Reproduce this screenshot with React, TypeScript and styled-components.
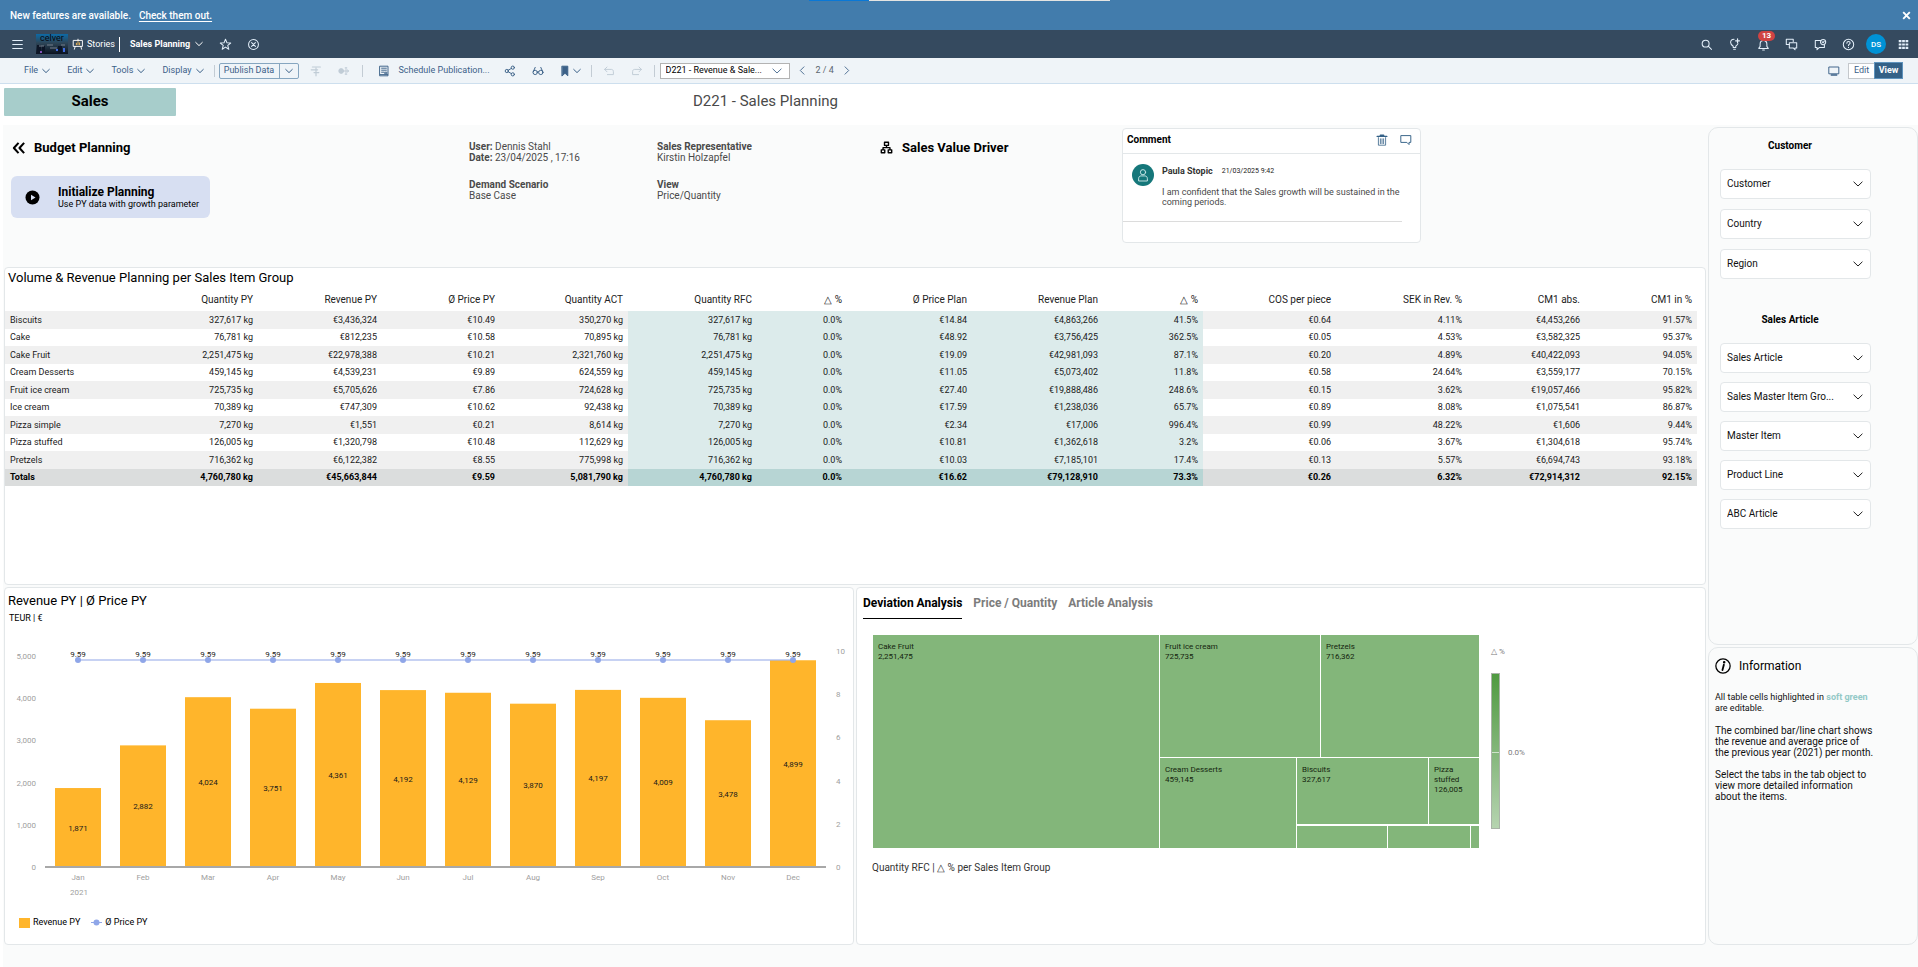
import React from "react";
import styled, { createGlobalStyle, css } from "styled-components";

const Global = createGlobalStyle`
  * { box-sizing: border-box; }
  body { margin: 0; background: #fff; color: #000; font: 10px/11px Roboto, "Liberation Sans", sans-serif; }
  button, select { font: inherit; color: inherit; border: 0; background: none; padding: 0; margin: 0; }
  select { appearance: none; }
  h1, h2, h3, p, dl, dd { margin: 0; font-size: inherit; font-weight: inherit; }
  svg { display: block; flex: none; }
`;

const Page = styled.div`min-height: 100vh; display: flex; flex-direction: column;`;

/* ---------- icons ---------- */

const Svg = styled.svg`fill: none; stroke: currentColor; stroke-linecap: round; stroke-linejoin: round;`;

const ICONS = {
  menu: <path d="M1.500 3h12M1.500 7.500h12M1.500 12h12" strokeLinecap="butt" />,
  close: <path d="M3 3l9 9M12 3l-9 9" strokeLinecap="butt" />,
  star: <path d="M7.500 1.500l1.700 4.100 4.300.2-3.400 2.800 1.200 4.400-3.800-2.500-3.800 2.500 1.200-4.400-3.400-2.800 4.300-.2z" />,
  closeCircle: <><circle cx="7.500" cy="7.500" r="5.700" /><path d="M5.300 5.300l4.400 4.400M9.700 5.300l-4.400 4.400" /></>,
  easel: <><path d="M2 3h11v7.500H2zM7.500 1.500V3M4 10.500L3 14M11 10.500l1 3.500" /><path d="M5.500 8.500v-2M7.500 8.500v-4M9.500 8.500V6" stroke="#f0b95a" /></>,
  search: <><circle cx="6.500" cy="6.500" r="4" /><path d="M9.500 9.500l3.700 3.700" /></>,
  bulb: <><path d="M6 11V9.500C4.500 8.500 3 7.300 3 5.300 3 3 4.800 1.500 7 1.500M6 11h3M9 11V9.300c1-.8 2-1.500 2.500-2.800M6.500 13h2" /><path d="M11 1v4.400M8.800 3.200h4.400" strokeWidth="1.400" /></>,
  bell: <><path d="M2 12h11l-1.600-2.300V7c0-2.400-1.600-4-3.900-4S3.600 4.600 3.600 7v2.700zM6.500 13.800h2" /></>,
  chats: <><path d="M9.500 4V1.500h-8v6H5" /><path d="M5 5.500h8.500v6h-2v2l-2-2H5z" /></>,
  feedback: <><path d="M8 3H1.500v8h2v2.500L6 11h6V8" /><circle cx="10.500" cy="4.700" r="3" /><path d="M9.500 4.500l1 1 1.200-1.600" /></>,
  help: <><circle cx="7.500" cy="7.500" r="6" /><path d="M5.600 6c0-1.200.8-1.900 1.900-1.900s1.900.7 1.900 1.700c0 1.300-1.900 1.400-1.900 2.900M7.500 10.700v.2" /></>,
  grid: <path d="M1 3h13M1 7.500h13M1 12h13" strokeDasharray="3.700 .95" strokeWidth="3" strokeLinecap="butt" />,
  monitor: <><path d="M1.500 2.500h12v8.500h-12z" /><path d="M4 12.500h7" strokeWidth="1.600" /></>,
  format: <><path d="M3 2.500h10M1.500 6h8M5 9.500h6M7.500 4v9.500" strokeWidth="1.500" /></>,
  nodes: <><circle cx="4" cy="7.500" r="3" fill="currentColor" /><path d="M7 7.500h6M10 3.500v8M9 3.500h2M9 11.500h2M11.500 6l2 1.500-2 1.500" /></>,
  schedule: <><path d="M2.500 1.500h10v12h-10z" /><path d="M4.500 4h6M4.500 6.500h6M4.500 9h3M9 9h2v2H9zM3 12h9" /></>,
  share: <><circle cx="3.500" cy="7.500" r="2" /><circle cx="11" cy="3.300" r="2" /><circle cx="11" cy="11.700" r="2" /><path d="M5.300 6.500l4-2.300M5.300 8.500l4 2.300" /></>,
  glasses: <><circle cx="4" cy="9.300" r="2.700" /><circle cx="11" cy="9.300" r="2.700" /><path d="M1.500 8.500L4 3M13.500 8.500L11 3M6.700 8.500c.5-.5 1.100-.5 1.600 0" /></>,
  bookmark: <path d="M4 1.500h7v12l-3.500-3.200L4 13.500z" fill="currentColor" />,
  undo: <path d="M5 2.500L2 5.500l3 3M2 5.500h8.500c1.500 0 2.500 1 2.500 2.800V12H5.500" />,
  redo: <path d="M10 2.500l3 3-3 3M13 5.500H4.500C3 5.500 2 6.500 2 8.300V12h7.500" />,
  left: <path d="M9.500 2.500l-5 5 5 5" />,
  right: <path d="M5.500 2.500l5 5-5 5" />,
  trash: <><path d="M1.500 3h12M5.500 2.500V1.500h4v1" strokeWidth="1.800" /><path d="M3 4.500v9.500h9V4.500M5.500 6v6M7.500 6v6M9.500 6v6" /></>,
  comment: <path d="M1.500 2h12v8.500h-2.200v2.700L8.600 10.500H1.500z" />,
  person: <><circle cx="7.500" cy="4.500" r="2.800" /><path d="M2.800 13.500v-2c0-2 1.200-3 2.700-3h4c1.500 0 2.700 1 2.700 3v2z" /></>,
  back: <path d="M7 2L2 7.500 7 13M13 2L8 7.500 13 13" strokeWidth="2.200" strokeLinecap="butt" />,
  tree: <><path d="M5.200 1.500h4.600v3.600H5.200zM1.500 10.200h4v3.300h-4zM9.500 10.200h4v3.300h-4zM7.500 5v2.700M3.500 10V7.700h8V10" strokeWidth="1.600" /></>,
  info: <><circle cx="7.500" cy="7.500" r="6.700" /><path d="M8.300 6.300L7 11.300" strokeWidth="1.700" /><circle cx="8.600" cy="4" r=".6" fill="currentColor" /></>,
  play: <><circle cx="7.500" cy="7.500" r="7" fill="currentColor" stroke="none" /><path d="M6 4.700v5.600l4.500-2.800z" fill="#d7dff2" stroke="none" /></>,
};

const Icon = ({ name, size = 13, weight = 1.2 }: { name: keyof typeof ICONS; size?: number; weight?: number }) => (
  <Svg width={size} height={size} viewBox="0 0 15 15" strokeWidth={weight} aria-hidden="true">{ICONS[name]}</Svg>
);

const Chevron = ({ size = 8 }: { size?: number }) => (
  <Svg width={size} height={size} viewBox="0 0 8 8" strokeWidth={size > 8 ? 0.7 : 1} aria-hidden="true"><path d="M.7 2.400L4 5.600l3.300-3.200" /></Svg>
);

/* ---------- notice and shell ---------- */

const Notice = styled.div`
  position: relative; height: 30px; padding: 0 6px 0 10px; display: flex; align-items: center;
  background: #427cac; color: #fff; font-weight: 500;
`;
const NoticeLink = styled.a`color: #fff; margin-left: 8px; text-underline-offset: 2px;`;
const Spacer = styled.div`flex: 1;`;
const Progress = styled.div`
  position: absolute; top: 0; left: 42.2%; width: 301px; height: 1px;
  background: linear-gradient(to right, #0a78d6 60px, #e4e4e2 60px);
`;
const CloseButton = styled.button`width: 12px; height: 12px; display: grid; place-items: center;`;

const Shell = styled.header`
  height: 28px; padding: 0 8px 0 10px; display: flex; align-items: center;
  background: #354a5f; color: #e3effa;
`;
const ShellButton = styled.button<{ $w?: number }>`
  position: relative; width: ${p => p.$w ?? 28}px; height: 24px; display: flex; align-items: center; justify-content: center;
`;
const Logo = styled.svg`margin: 0 4px 0 12px;`;
const StoriesLink = styled.a`
  display: flex; align-items: center; gap: 3px; height: 15px; padding-right: 4px; color: #fff; text-decoration: none;
  font-size: 9px; border-right: 1px solid #fff;
`;
const StoryButton = styled.button`
  display: flex; align-items: center; gap: 5px; margin: 0 8px 0 10px; color: #fff; font-size: 9px; font-weight: 700;
`;
const Badge = styled.span`
  position: absolute; top: -1px; left: 9px; width: 17px; height: 10px; border-radius: 5px;
  background: #d04343; color: #fff; font-size: 8px; line-height: 10px; font-weight: 700; text-align: center;
`;
const User = styled.button`
  width: 20px; height: 20px; margin: 0 10px 0 4px; border-radius: 50%; background: #0092d6; color: #fff; font-size: 8px; font-weight: 500;
`;

/* ---------- toolbar ---------- */

const Toolbar = styled.nav`
  height: 26px; padding: 0 15px 0 24px; display: flex; align-items: center;
  background: #eff4f8; border-bottom: 1px solid #cddfee; color: #3c6188; font-size: 9px; white-space: nowrap;
`;
const Menus = styled.div`display: flex; gap: 17px;`;
const MenuButton = styled.button`display: flex; align-items: center; gap: 4px;`;
const Rule = styled.i<{ $l?: number; $r?: number }>`
  width: 1px; height: 12px; background: #c3ccd4; margin: 0 ${p => p.$r ?? 3}px 0 ${p => p.$l ?? 3}px;
`;
const Split = styled.div`
  display: flex; height: 16px; border: 1px solid #86a6c0; border-radius: 2px; margin-right: 3px;
`;
const SplitButton = styled.button<{ $w: number }>`
  width: ${p => p.$w}px; display: flex; align-items: center; justify-content: center;
  & + & { border-left: 1px solid #86a6c0; }
`;
const ToolButton = styled.button<{ $w?: number }>`
  width: ${p => p.$w ?? 28}px; height: 20px; display: flex; align-items: center; justify-content: center; gap: 2px;
  &:disabled { color: #c0ccd6; }
`;
const ScheduleButton = styled.button`display: flex; align-items: center; gap: 9px; width: 111px; margin-right: 7px;`;
const SelectBox = styled.div`
  position: relative; display: flex; align-items: center;
  & > svg { position: absolute; right: 8px; pointer-events: none; }
`;
const PageSelect = styled.select`
  width: 130px; height: 16px; padding-left: 5px; border: 1px solid #b3b3b3; background: #fff; color: #000;
`;
const PageCount = styled.span`width: 18px; text-align: center; color: #5c6670;`;
const ModeButton = styled.button<{ $on?: boolean }>`
  height: 16px; width: 26px; background: #fff; border: 1px solid #c4c8cc; border-right: 0;
  ${p => p.$on && css`height: 17px; width: 29px; background: #346187; color: #fff; border: 1px solid #5e93bd; font-weight: 700;`}
`;

/* ---------- page body ---------- */

const TitleBar = styled.div`
  height: 41px; margin-left: 3px; padding: 4px 0 0 1px; display: grid; grid-template-columns: 172px 1fr 1080px;
  align-items: start; color: #4a4a4a; font-size: 15px; line-height: 26px;
`;
const AreaTag = styled.div`
  padding-bottom: 2px; background: #a7cdcb; color: #000; font-weight: 700; text-align: center; border-radius: 1px;
`;
const PageTitle = styled.h1`text-align: right; white-space: nowrap;`;

const Board = styled.main`
  flex: 1; margin-left: 3px; padding: 0 0 22px 1px; background: #fafbfb;
  display: grid; grid-template-columns: minmax(0, 1fr) 210px; column-gap: 2px;
`;
const Column = styled.div`display: flex; flex-direction: column; gap: 2px;`;
const Panel = styled.section`background: #fff; border: 1px solid #e3e7e9; border-radius: 4px;`;

const Hero = styled.div`
  height: 140px; display: grid; grid-template-columns: 465fr 188fr 223fr 242fr 300fr 284fr; color: #4a4a4a;
`;
const HeroHeading = styled.h2<{ $pad?: number; $gap?: number }>`
  display: flex; align-items: center; height: 15px; gap: ${p => p.$gap ?? 9}px; padding-left: ${p => p.$pad ?? 0}px;
  color: #000; font-size: 13px; font-weight: 700; white-space: nowrap;
`;
const HeroCell = styled.div`padding-top: 15px;`;
const Facts = styled.dl`
  padding-top: 16px;
  dt { font-weight: 700; }
  dd + dt { margin-top: 16px; }
`;
const Inline = styled.span`font-weight: 400;`;
const InitButton = styled.button`
  display: flex; align-items: center; gap: 18px; width: 199px; height: 42px; margin: 21px 0 0 7px; padding: 0 0 0 14px;
  border-radius: 6px; background: #d7dff2; color: #000; text-align: left; font-size: 9px;
`;
const InitTitle = styled.b`display: block; font-size: 12px; line-height: 14px;`;

const CommentCard = styled(Panel)`height: 115px; margin-top: 3px; width: 299px; color: #4a4a4a; font-size: 9px; line-height: 10px;`;
const CommentHead = styled.header`
  height: 25px; padding: 0 2px 3px 4px; display: flex; align-items: center;
  border-bottom: 1px solid #e3e7e9; color: #000; font-size: 10px; font-weight: 700;
`;
const CommentBody = styled.div`
  display: grid; grid-template-columns: 22px 1fr; column-gap: 8px; margin-right: 18px; padding: 10px 0 14px 9px; border-bottom: 1px solid #dcdcdc;
`;
const Avatar = styled.span`
  width: 22px; height: 22px; border-radius: 50%; background: #15777a; color: #cfe9e9; display: grid; place-items: center;
`;
const Author = styled.div`
  display: flex; gap: 9px; line-height: 15px; margin-bottom: 8px; color: #333;
  time { font-size: 7px; color: #222; }
`;
const IconButton = styled.button`width: 24px; height: 20px; display: grid; place-items: center; color: #346187;`;

/* ---------- planning table ---------- */

const TablePanel = styled(Panel)`min-height: 318px; padding: 2px 8px 0 0;`;
const PanelTitle = styled.h2`font-size: 13px; line-height: 15px; padding-left: 3px;`;
const Grid = styled.table`
  width: 100%; table-layout: fixed; border-collapse: collapse; text-align: right; font-size: 9px; color: #1a1a1a; white-space: nowrap;
  th, td { padding: 0 5px 0 0; font-weight: 400; }
  thead th { height: 26px; padding-top: 2px; font-size: 10px; color: #222; }
  tbody th { text-align: left; padding-left: 5px; }
  tbody tr { height: 17px; }
  tbody tr:nth-child(odd) { height: 18px; background: #f0f0f0; }
  tbody tr:last-child { background: #dbdddd; color: #000; }
  tbody tr:last-child > * { font-weight: 700; }
  tbody td:nth-child(n + 6):nth-child(-n + 10) { background: #dcebeb; }
  tbody tr:last-child td:nth-child(n + 6):nth-child(-n + 10) { background: #b7d5d4; }
`;

const COLUMNS: [string, number][] = [
  ["", 129], ["Quantity PY", 124], ["Revenue PY", 124], ["Ø Price PY", 118], ["Quantity ACT", 128], ["Quantity RFC", 129],
  ["△ %", 90], ["Ø Price Plan", 125], ["Revenue Plan", 131], ["△ %", 100], ["COS per piece", 133], ["SEK in Rev. %", 131],
  ["CM1 abs.", 118], ["CM1 in %", 112],
];
const ROWS = `Biscuits|327,617 kg|€3,436,324|€10.49|350,270 kg|327,617 kg|0.0%|€14.84|€4,863,266|41.5%|€0.64|4.11%|€4,453,266|91.57%
Cake|76,781 kg|€812,235|€10.58|70,895 kg|76,781 kg|0.0%|€48.92|€3,756,425|362.5%|€0.05|4.53%|€3,582,325|95.37%
Cake Fruit|2,251,475 kg|€22,978,388|€10.21|2,321,760 kg|2,251,475 kg|0.0%|€19.09|€42,981,093|87.1%|€0.20|4.89%|€40,422,093|94.05%
Cream Desserts|459,145 kg|€4,539,231|€9.89|624,559 kg|459,145 kg|0.0%|€11.05|€5,073,402|11.8%|€0.58|24.64%|€3,559,177|70.15%
Fruit ice cream|725,735 kg|€5,705,626|€7.86|724,628 kg|725,735 kg|0.0%|€27.40|€19,888,486|248.6%|€0.15|3.62%|€19,057,466|95.82%
Ice cream|70,389 kg|€747,309|€10.62|92,438 kg|70,389 kg|0.0%|€17.59|€1,238,036|65.7%|€0.89|8.08%|€1,075,541|86.87%
Pizza simple|7,270 kg|€1,551|€0.21|8,614 kg|7,270 kg|0.0%|€2.34|€17,006|996.4%|€0.99|48.22%|€1,606|9.44%
Pizza stuffed|126,005 kg|€1,320,798|€10.48|112,629 kg|126,005 kg|0.0%|€10.81|€1,362,618|3.2%|€0.06|3.67%|€1,304,618|95.74%
Pretzels|716,362 kg|€6,122,382|€8.55|775,998 kg|716,362 kg|0.0%|€10.03|€7,185,101|17.4%|€0.13|5.57%|€6,694,743|93.18%
Totals|4,760,780 kg|€45,663,844|€9.59|5,081,790 kg|4,760,780 kg|0.0%|€16.62|€79,128,910|73.3%|€0.26|6.32%|€72,914,312|92.15%`
  .split("\n").map(r => r.split("|"));

const PlanningTable = () => (
  <Grid>
    <colgroup>{COLUMNS.map(([, w], i) => <col key={i} width={w} />)}</colgroup>
    <thead><tr>{COLUMNS.map(([c], i) => <th key={i} scope="col">{c}</th>)}</tr></thead>
    <tbody>
      {ROWS.map(([name, ...cells]) => (
        <tr key={name}><th scope="row">{name}</th>{cells.map((c, i) => <td key={i}>{c}</td>)}</tr>
      ))}
    </tbody>
  </Grid>
);

/* ---------- charts ---------- */

const Lower = styled.div`flex: 1; display: grid; grid-template-columns: 1fr 1fr; gap: 2px;`;
const ChartPanel = styled(Panel)`padding: 5px 0 12px;`;
const Unit = styled.p`padding: 4px 0 2px 4px; font-size: 9px; line-height: 12px;`;
const Chart = styled.svg`width: 100%; height: auto; font-size: 8px;`;
const Legend = styled.div`display: flex; align-items: center; gap: 3px; padding: 4px 0 0 14px; font-size: 9px;`;
const Swatch = styled.i`width: 11px; height: 10px; background: #ffb52b;`;
const Marker = styled.svg`margin-left: 8px;`;

const MONTHS: [string, number][] = [["Jan", 1871], ["Feb", 2882], ["Mar", 4024], ["Apr", 3751], ["May", 4361], ["Jun", 4192],
  ["Jul", 4129], ["Aug", 3870], ["Sep", 4197], ["Oct", 4009], ["Nov", 3478], ["Dec", 4899]];

const RevenueChart = () => {
  const base = 241;
  const cx = (i: number) => 73 + i * 65;
  const ly = base - 207;
  return (
    <Chart viewBox="0 0 848 287" role="img" aria-label="Revenue and price per month">
      <g fill="#a0a0a0">
        {[0, 1, 2, 3, 4, 5].map(n => (
          <React.Fragment key={n}>
            <text x="31" y={base + 3 - n * 42.2} textAnchor="end">{(n * 1000).toLocaleString("en-US")}</text>
            <text x="831" y={base + 3 - n * 43.2}>{n * 2}</text>
          </React.Fragment>
        ))}
        {MONTHS.map(([m], i) => <text key={m} x={cx(i)} y="254" textAnchor="middle">{m}</text>)}
        <text x="74" y="269" textAnchor="middle">2021</text>
      </g>
      {MONTHS.map(([m, v], i) => {
        const h = v * 0.0422;
        return (
          <React.Fragment key={m}>
            <rect x={cx(i) - 23} y={base - h} width="46" height={h} fill="#ffb52b" />
            <text x={cx(i)} y={base - h / 2 + 3} textAnchor="middle" fill="#1a1a1a">{v.toLocaleString("en-US")}</text>
          </React.Fragment>
        );
      })}
      <path d="M40 241H821" stroke="#a8a8a8" strokeWidth="2" />
      <path d={`M${cx(0)} ${ly}H${cx(11)}`} stroke="#8fa6e8" strokeWidth="1.200" />
      {MONTHS.map(([m], i) => (
        <React.Fragment key={m}>
          <circle cx={cx(i)} cy={ly} r="3" fill="#8fa6e8" />
          <text x={cx(i)} y={ly - 3} textAnchor="middle" fill="#1a1a1a">9.59</text>
        </React.Fragment>
      ))}
    </Chart>
  );
};

const Tabs = styled.div`display: flex; gap: 11px; margin-left: 6px;`;
const Tab = styled.button<{ $on?: boolean }>`
  height: 26px; padding-bottom: 4px; font-size: 12px; font-weight: 700; color: ${p => (p.$on ? "#000" : "#7c7c7c")};
  border-bottom: 1px solid ${p => (p.$on ? "#000" : "transparent")};
`;
const Caption = styled.p`padding: 0 0 0 15px; color: #333;`;

type Cell = [number, number, number, number, string[]];
const CELLS: Cell[] = [
  [16, 16, 286, 213, ["Cake Fruit", "2,251,475"]],
  [303, 16, 160, 122, ["Fruit ice cream", "725,735"]],
  [464, 16, 158, 122, ["Pretzels", "716,362"]],
  [303, 139, 136, 90, ["Cream Desserts", "459,145"]],
  [440, 139, 131, 66, ["Biscuits", "327,617"]],
  [572, 139, 50, 66, ["Pizza", "stuffed", "126,005"]],
  [440, 207, 90, 22, []],
  [531, 207, 82, 22, []],
  [614, 207, 8, 22, []],
];
const TreeMap = () => (
  <Chart viewBox="0 0 848 243" role="img" aria-label="Quantity RFC per sales item group">
    <defs><linearGradient id="scale" x2="0" y2="1"><stop stopColor="#4f9a40" /><stop offset=".5" stopColor="#83b67a" /><stop offset="1" stopColor="#b6d4b0" /></linearGradient></defs>
    {CELLS.map(([x, y, w, h, lines], i) => (
      <g key={i} fill="#15250f">
        <rect x={x} y={y} width={w} height={h} fill="#83b67a" />
        {lines.map((l, n) => <text key={l} x={x + 5} y={y + 14 + n * 10}>{l}</text>)}
      </g>
    ))}
    <g fill="#7a7a7a"><text x="634" y="35">△ %</text><text x="651" y="136">0.0%</text></g>
    <rect x="634.500" y="54.500" width="8" height="155" fill="url(#scale)" stroke="#a9b3a7" />
    <path d="M635 133.500h7" stroke="#cfe3cb" />
  </Chart>
);

/* ---------- side column ---------- */

const Side = styled.div`display: flex; flex-direction: column; gap: 2px; padding-top: 2px;`;
const SidePanel = styled.section<{ $grow?: boolean }>`
  border: 1px solid #e3e7e9; border-radius: 10px; padding: 11px 11px 0; min-height: 518px;
  ${p => p.$grow && css`flex: 1; min-height: 0; padding: 10px 6px;`}
`;
const FilterTitle = styled.h3`width: 140px; height: 30px; font-weight: 700; line-height: 14px; text-align: center;`;
const Filters = styled.div<{ $gap: number }>`display: flex; flex-direction: column; gap: ${p => p.$gap}px; width: 151px; margin-bottom: 34px;`;
const FilterSelect = styled.select`
  width: 100%; height: 30px; padding: 0 0 2px 6px; border: 1px solid #e3e7e9; border-radius: 4px; background: #fff; color: #111;
`;
const Filter = ({ name }: { name: string }) => (
  <SelectBox><FilterSelect aria-label={name}><option>{name}</option></FilterSelect><Chevron size={10} /></SelectBox>
);
const InfoTitle = styled.h2`display: flex; align-items: center; gap: 8px; height: 16px; font-size: 12px; margin-bottom: 18px;`;
const InfoText = styled.p<{ $small?: boolean }>`
  margin-bottom: 11px; font-size: ${p => (p.$small ? 9 : 10)}px; color: #111;
  b { color: #93c9c7; }
`;

export default function App() {
  return (
    <Page>
      <Global />
      <Notice>
        New features are available. <NoticeLink href="#">Check them out.</NoticeLink>
        <Progress /><Spacer /><CloseButton aria-label="Close"><Icon name="close" size={11} weight={2.6} /></CloseButton>
      </Notice>
      <Shell>
        <ShellButton $w={14} aria-label="Menu"><Icon name="menu" /></ShellButton>
        <Logo width="32" height="20" viewBox="0 0 32 20" aria-hidden="true">
          <defs><linearGradient id="sky" x2="0" y2="1"><stop stopColor="#0d6aa6" /><stop offset=".45" stopColor="#2e4658" /><stop offset="1" stopColor="#0a1220" /></linearGradient></defs>
          <path d="M0 0h32v20H0z" fill="url(#sky)" />
          <path d="M1 11h4v9H1zM6 12h3v8H6zM22 12h4v8h-4z" fill="#0c1526" />
          <path d="M3 12h5M11 11h6M14 14h7M25 11h4" stroke="#77808e" />
          <path d="M20 15h2v2h-2zM27 14h2v4h-2z" fill="#3f6ce0" />
          <path d="M4 17h2v2H4z" fill="#8452b8" />
          <text x="16" y="7" textAnchor="middle" fontSize="9" fill="#05080f">celver</text>
        </Logo>
        <StoriesLink href="#"><Icon name="easel" size={12} />Stories</StoriesLink>
        <StoryButton>Sales Planning<Chevron /></StoryButton>
        <ShellButton aria-label="Favourite"><Icon name="star" /></ShellButton>
        <ShellButton aria-label="Close story"><Icon name="closeCircle" /></ShellButton>
        <Spacer />
        <ShellButton aria-label="Search"><Icon name="search" /></ShellButton>
        <ShellButton $w={29} aria-label="Insights"><Icon name="bulb" /></ShellButton>
        <ShellButton aria-label="Notifications"><Icon name="bell" /><Badge>13</Badge></ShellButton>
        <ShellButton $w={29} aria-label="Discussions"><Icon name="chats" /></ShellButton>
        <ShellButton aria-label="Feedback"><Icon name="feedback" /></ShellButton>
        <ShellButton aria-label="Help"><Icon name="help" /></ShellButton>
        <User>DS</User>
        <ShellButton $w={14} aria-label="Products"><Icon name="grid" size={11} /></ShellButton>
      </Shell>
      <Toolbar>
        <Menus>{["File", "Edit", "Tools", "Display"].map(m => <MenuButton key={m}>{m}<Chevron /></MenuButton>)}</Menus>
        <Rule $l={10} $r={4} />
        <Split><SplitButton $w={59}>Publish Data</SplitButton><SplitButton $w={19} aria-label="More"><Chevron /></SplitButton></Split>
        <ToolButton disabled aria-label="Format"><Icon name="format" size={12} /></ToolButton>
        <ToolButton disabled aria-label="Allocate"><Icon name="nodes" size={12} /></ToolButton>
        <Rule $l={4} $r={15} />
        <ScheduleButton><Icon name="schedule" size={12} />Schedule Publication...</ScheduleButton>
        <ToolButton aria-label="Share"><Icon name="share" size={12} /></ToolButton>
        <ToolButton aria-label="View details"><Icon name="glasses" size={12} /></ToolButton>
        <ToolButton $w={36} aria-label="Bookmark"><Icon name="bookmark" size={12} /><Chevron /></ToolButton>
        <Rule />
        <ToolButton disabled aria-label="Undo"><Icon name="undo" size={12} /></ToolButton>
        <ToolButton disabled aria-label="Redo"><Icon name="redo" size={12} /></ToolButton>
        <Rule $r={5} />
        <SelectBox><PageSelect aria-label="Page"><option>D221 - Revenue &amp; Sale...</option></PageSelect><Chevron size={10} /></SelectBox>
        <ToolButton $w={26} aria-label="Previous page"><Icon name="left" size={11} /></ToolButton>
        <PageCount>2 / 4</PageCount>
        <ToolButton $w={26} aria-label="Next page"><Icon name="right" size={11} /></ToolButton>
        <Spacer />
        <ToolButton aria-label="Full screen"><Icon name="monitor" size={12} /></ToolButton>
        <ModeButton>Edit</ModeButton><ModeButton $on>View</ModeButton>
      </Toolbar>
      <TitleBar><AreaTag>Sales</AreaTag><PageTitle>D221 - Sales Planning</PageTitle></TitleBar>
      <Board>
        <Column>
          <Hero>
            <HeroCell>
              <HeroHeading $pad={8} $gap={8}><Icon name="back" size={14} />Budget Planning</HeroHeading>
              <InitButton><Icon name="play" size={15} /><span><InitTitle>Initialize Planning</InitTitle>Use PY data with growth parameter</span></InitButton>
            </HeroCell>
            <Facts>
              <dt>User: <Inline>Dennis Stahl</Inline></dt><dd><b>Date:</b> 23/04/2025 , 17:16</dd>
              <dt>Demand Scenario</dt><dd>Base Case</dd>
            </Facts>
            <Facts><dt>Sales Representative</dt><dd>Kirstin Holzapfel</dd><dt>View</dt><dd>Price/Quantity</dd></Facts>
            <HeroCell><HeroHeading><Icon name="tree" size={13} />Sales Value Driver</HeroHeading></HeroCell>
            <CommentCard>
              <CommentHead>Comment<Spacer />
                <IconButton aria-label="Delete"><Icon name="trash" size={12} weight={1} /></IconButton>
                <IconButton aria-label="Comment"><Icon name="comment" size={12} /></IconButton>
              </CommentHead>
              <CommentBody>
                <Avatar><Icon name="person" size={14} weight={1} /></Avatar>
                <div>
                  <Author><b>Paula Stopic</b><time>21/03/2025 9:42</time></Author>
                  I am confident that the Sales growth will be sustained in the coming periods.
                </div>
              </CommentBody>
            </CommentCard>
          </Hero>
          <TablePanel>
            <PanelTitle>Volume &amp; Revenue Planning per Sales Item Group</PanelTitle>
            <PlanningTable />
          </TablePanel>
          <Lower>
            <ChartPanel>
              <PanelTitle>Revenue PY | Ø Price PY</PanelTitle>
              <Unit>TEUR | €</Unit>
              <RevenueChart />
              <Legend>
                <Swatch />Revenue PY
                <Marker width="11" height="7" aria-hidden="true"><path d="M0 3.500h11" stroke="#8fa6e8" /><circle cx="5.500" cy="3.500" r="3" fill="#8fa6e8" /></Marker>Ø Price PY
              </Legend>
            </ChartPanel>
            <ChartPanel>
              <Tabs role="tablist"><Tab $on role="tab">Deviation Analysis</Tab><Tab role="tab">Price / Quantity</Tab><Tab role="tab">Article Analysis</Tab></Tabs>
              <TreeMap />
              <Caption>Quantity RFC | △ % per Sales Item Group</Caption>
            </ChartPanel>
          </Lower>
        </Column>
        <Side>
          <SidePanel>
            <FilterTitle>Customer</FilterTitle>
            <Filters $gap={10}>{["Customer", "Country", "Region"].map(n => <Filter key={n} name={n} />)}</Filters>
            <FilterTitle>Sales Article</FilterTitle>
            <Filters $gap={9}>{["Sales Article", "Sales Master Item Gro...", "Master Item", "Product Line", "ABC Article"].map(n => <Filter key={n} name={n} />)}</Filters>
          </SidePanel>
          <SidePanel $grow>
            <InfoTitle><Icon name="info" size={16} />Information</InfoTitle>
            <InfoText $small>All table cells highlighted in <b>soft green</b><br />are editable.</InfoText>
            <InfoText>The combined bar/line chart shows<br />the revenue and average price of<br />the previous year (2021) per month.</InfoText>
            <InfoText>Select the tabs in the tab object to<br />view more detailed information<br />about the items.</InfoText>
          </SidePanel>
        </Side>
      </Board>
    </Page>
  );
}
